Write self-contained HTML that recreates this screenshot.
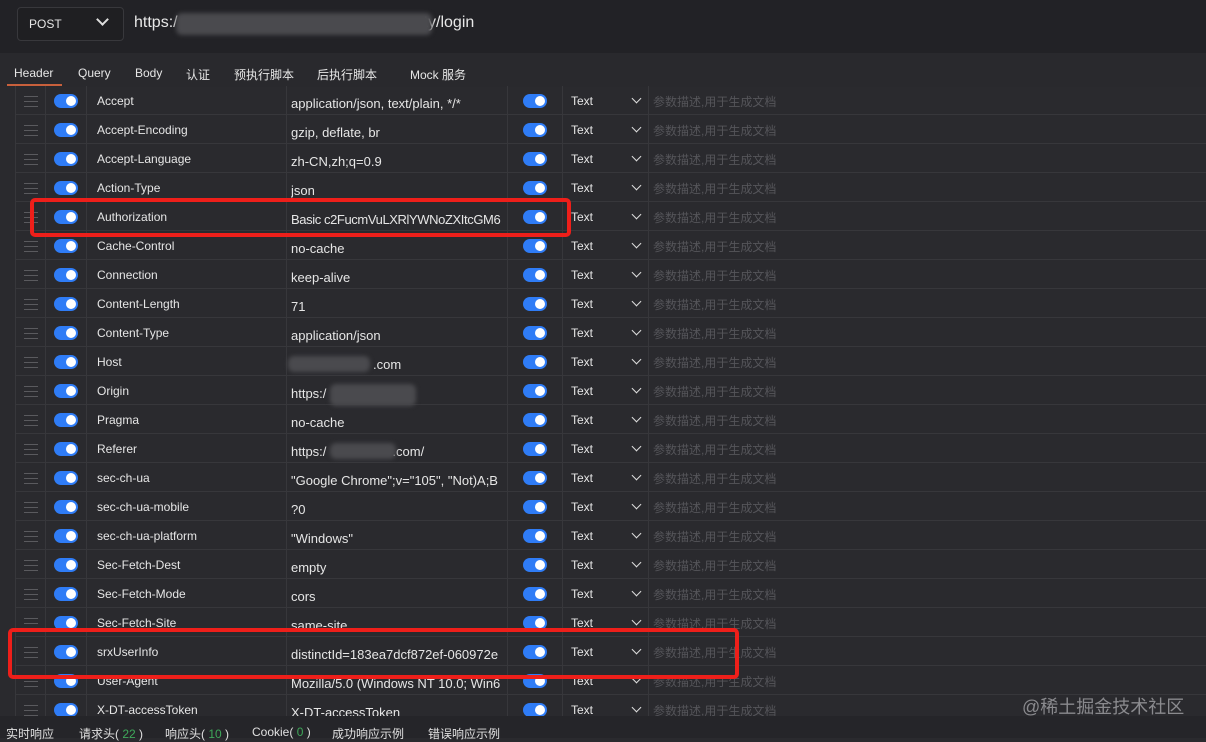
<!DOCTYPE html>
<html><head><meta charset="utf-8"><style>
*{margin:0;padding:0;box-sizing:border-box}
body{width:1206px;height:738px;overflow:hidden;background:#2a2a2e;font-family:"Liberation Sans","Noto Sans CJK SC",sans-serif;position:relative;color:#e6e6e6}
.top{position:absolute;left:0;top:0;width:1206px;height:53px;background:#222226}
.method{position:absolute;left:17px;top:7px;width:107px;height:34px;border:1px solid #38383c;border-radius:4px;background:#1f1f22;font-size:12px;color:#e6e6e6;padding:9px 0 0 11px}
.url{position:absolute;left:134px;top:14px;font-size:16px;color:#e8e8e8}
.blur{position:absolute;background:#4a4a4e;filter:blur(2px);border-radius:6px}
.tabs{position:absolute;left:0;top:53px;width:1206px;height:34px;background:#29292d}
.tab{position:absolute;top:13px;font-size:12px;color:#e6e6e6}
.ul{position:absolute;left:7px;top:84px;width:55px;height:2px;background:#c8603c}
.row{position:absolute;left:15px;width:1191px;height:29px;border-bottom:1px solid #37373b}
.v{position:absolute;top:86px;width:1px;height:630px;background:#37373b}
.h{position:absolute;left:9px;width:14px;height:1px;background:#5a5a5e}
.tg{position:absolute;width:24px;height:14px;border-radius:7px;background:#2f7cf6}
.tg:after{content:"";position:absolute;right:2px;top:2px;width:10px;height:10px;border-radius:50%;background:#fff}
.k{position:absolute;left:82px;top:8px;font-size:12px}
.val{position:absolute;left:276px;top:10px;font-size:13px;width:218px;overflow:hidden;white-space:nowrap}
.t{position:absolute;left:556px;top:8px;font-size:12px}
.ch{position:absolute;left:618px;top:9px;width:7px;height:7px;border-right:1.6px solid #ddd;border-bottom:1.6px solid #ddd;transform:rotate(45deg)}
.p{position:absolute;left:638px;top:7px;font-size:12px;color:#55555a}
.red{position:absolute;border:4px solid #ee1f1a;border-radius:5px}
.bot{position:absolute;left:0;top:716px;width:1206px;height:22px;background:#252529}
.b{position:absolute;top:9px;font-size:12px;color:#e0e0e0}
.g{color:#3fa85a}
.wm{position:absolute;left:1022px;top:693px;font-size:18px;color:#8a8a8e}
</style></head><body>
<div class="top">
<div class="method">POST<span style="position:absolute;left:80px;top:7px;width:9px;height:9px;border-right:2px solid #ddd;border-bottom:2px solid #ddd;transform:rotate(45deg)"></span></div>
<div class="url">https:/<span style="display:inline-block;width:246px"></span>ty/login</div>
<div class="blur" style="left:176px;top:13px;width:256px;height:22px"></div>
</div>
<div class="tabs">
<span class="tab" style="left:14px">Header</span><span class="tab" style="left:78px">Query</span><span class="tab" style="left:135px">Body</span><span class="tab" style="left:186px">认证</span><span class="tab" style="left:234px">预执行脚本</span><span class="tab" style="left:317px">后执行脚本</span><span class="tab" style="left:410px">Mock 服务</span>
</div>
<div class="ul"></div>
<div id="rows"></div>
<div class="v" style="left:15px"></div><div class="v" style="left:45px"></div><div class="v" style="left:86px"></div><div class="v" style="left:286px"></div><div class="v" style="left:507px"></div><div class="v" style="left:562px"></div><div class="v" style="left:648px"></div>
<script>
var d=[["Accept","application/json, text/plain, */*"],["Accept-Encoding","gzip, deflate, br"],["Accept-Language","zh-CN,zh;q=0.9"],["Action-Type","json"],["Authorization","<span style='letter-spacing:-0.4px'>Basic c2FucmVuLXRlYWNoZXItcGM6</span>"],["Cache-Control","no-cache"],["Connection","keep-alive"],["Content-Length","71"],["Content-Type","application/json"],["Host","<span style='display:inline-block;width:82px'></span>.com"],["Origin","https:/"],["Pragma","no-cache"],["Referer","https:/<span style='display:inline-block;width:66px'></span>.com/"],["sec-ch-ua","\"Google Chrome\";v=\"105\", \"Not)A;B"],["sec-ch-ua-mobile","?0"],["sec-ch-ua-platform","\"Windows\""],["Sec-Fetch-Dest","empty"],["Sec-Fetch-Mode","cors"],["Sec-Fetch-Site","same-site"],["srxUserInfo","distinctId=183ea7dcf872ef-060972e"],["User-Agent","Mozilla/5.0 (Windows NT 10.0; Win6"],["X-DT-accessToken","X-DT-accessToken"]];
var h="";d.forEach(function(r,i){var y=86+29*i;h+='<div class="row" style="top:'+y+'px"><div class="h" style="top:10px"></div><div class="h" style="top:15px"></div><div class="h" style="top:20px"></div><div class="tg" style="left:39px;top:8px"></div><div class="k">'+r[0]+'</div><div class="val">'+r[1]+'</div><div class="tg" style="left:508px;top:8px"></div><div class="t">Text</div><div class="ch"></div><div class="p">参数描述,用于生成文档</div></div>';});
document.getElementById("rows").innerHTML=h;
</script>
<div class="blur" style="left:288px;top:356px;width:82px;height:16px"></div>
<div class="blur" style="left:330px;top:384px;width:86px;height:22px"></div>
<div class="blur" style="left:330px;top:443px;width:66px;height:16px"></div>
<div class="red" style="left:30px;top:198px;width:541px;height:39px"></div>
<div class="red" style="left:8px;top:628px;width:731px;height:51px"></div>
<div class="wm">@稀土掘金技术社区</div>
<div class="bot">
<span class="b" style="left:6px">实时响应</span><span class="b" style="left:79px">请求头(<span class="g"> 22 </span>)</span><span class="b" style="left:165px">响应头(<span class="g"> 10 </span>)</span><span class="b" style="left:252px">Cookie(<span class="g"> 0 </span>)</span><span class="b" style="left:332px">成功响应示例</span><span class="b" style="left:428px">错误响应示例</span>
</div>
</body></html>
